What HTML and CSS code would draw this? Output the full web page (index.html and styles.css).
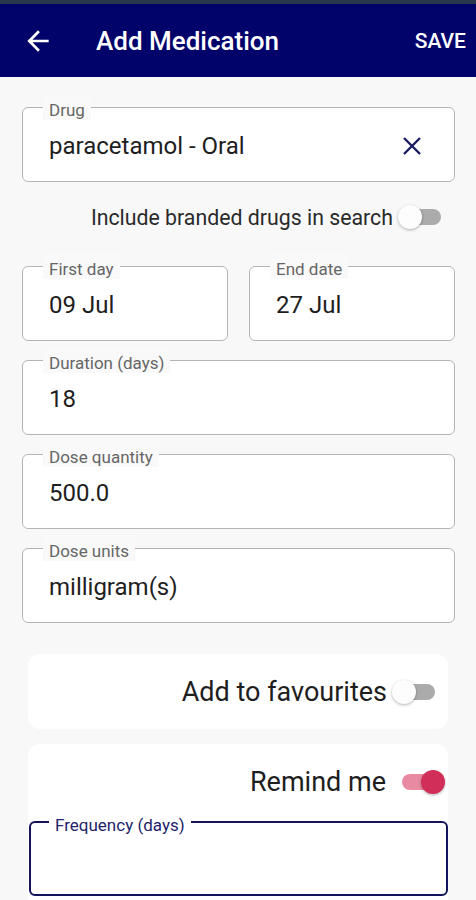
FILE: index.html
```html
<!DOCTYPE html>
<html lang="en">
<head>
  <meta charset="UTF-8" />
  <meta name="viewport" content="width=device-width, initial-scale=1" />
  <title>Add Medication</title>
  <link rel="stylesheet" href="styles.css">
</head>
<body>

  <header class="appbar">
    <span class="back">
      <svg width="32" height="32" viewBox="0 0 24 24"><path d="M20 11H7.83l5.59-5.59L12 4l-8 8 8 8 1.41-1.41L7.83 13H20v-2z" fill="#fff"/></svg>
    </span>
    <h1 class="title">Add Medication</h1>
    <span class="save">SAVE</span>
  </header>

  <main class="form">
    <fieldset class="field">
      <legend>Drug</legend>
      <div class="value-row">
        <span class="value">paracetamol - Oral</span>
        <svg class="clear" width="20" height="20" viewBox="0 0 20 20"><path d="M2 2L18 18M18 2L2 18" stroke="#1c1c60" stroke-width="2.4" fill="none"/></svg>
      </div>
    </fieldset>

    <div class="toggle-row branded">
      <span>Include branded drugs in search</span>
      <span class="switch"></span>
    </div>

    <div class="dates">
      <fieldset class="field">
        <legend>First day</legend>
        <span class="value">09 Jul</span>
      </fieldset>
      <fieldset class="field">
        <legend>End date</legend>
        <span class="value">27 Jul</span>
      </fieldset>
    </div>

    <fieldset class="field">
      <legend>Duration (days)</legend>
      <span class="value">18</span>
    </fieldset>

    <fieldset class="field">
      <legend>Dose quantity</legend>
      <span class="value">500.0</span>
    </fieldset>

    <fieldset class="field">
      <legend>Dose units</legend>
      <span class="value">milligram(s)</span>
    </fieldset>

    <section class="card fav">
      <div class="toggle-row big">
        <span>Add to favourites</span>
        <span class="switch"></span>
      </div>
    </section>

    <section class="card remind">
      <div class="toggle-row big">
        <span>Remind me</span>
        <span class="switch on"></span>
      </div>
      <fieldset class="field focus">
        <legend>Frequency (days)</legend>
        <span class="value">&nbsp;</span>
      </fieldset>
    </section>
  </main>

</body>
</html>
```

FILE: styles.css
```css
body {
  margin: 0;
  font-family: Roboto, "Noto Sans", Arial, sans-serif;
  background: #f8f8f8;
  color: #1e1e1e;
  overflow: hidden;
}
.appbar {
  display: flex;
  align-items: center;
  height: 73px;
  border-top: 4px solid #27384c;
  background: #02026b;
  color: #fff;
  padding: 0 10px 0 22px;
}
.back {
  display: flex;
  width: 32px;
}
.title {
  margin: 0 0 0 42px;
  font-size: 26px;
  font-weight: 500;
  flex: 1;
}
.save {
  font-size: 21px;
  font-weight: 500;
}
.form {
  padding: 17px 21px 0 22px;
}
.field {
  margin: 0 0 6px 0;
  padding: 12px 26px 21px 26px;
  border: 1px solid #b4b4b4;
  border-radius: 6px;
  background: #fff;
  min-width: 0;
}
.field legend {
  margin-left: -6px;
  padding: 6px 6px 0 6px;
  font-size: 17px;
  line-height: 20px;
  color: #666;
  background: #f9f9f9;
}
.value {
  display: block;
  font-size: 24px;
  line-height: 28px;
}
.value-row {
  display: flex;
  align-items: center;
  justify-content: space-between;
  padding-right: 6px;
}
.dates {
  display: grid;
  grid-template-columns: 1fr 1fr;
  column-gap: 21px;
}
.toggle-row {
  display: flex;
  align-items: center;
  justify-content: flex-end;
  gap: 5px;
}
.toggle-row.branded {
  height: 30px;
  margin: 20px 0 21px 0;
  padding-right: 14px;
  font-size: 21.3px;
  color: #2a2a2a;
}
.switch {
  position: relative;
  display: inline-block;
  width: 43px;
  height: 26px;
}
.switch::before {
  content: '';
  position: absolute;
  left: 8px;
  right: 0;
  top: 5px;
  height: 16px;
  border-radius: 8px;
  background: #ababab;
}
.switch::after {
  content: '';
  position: absolute;
  left: 0;
  top: 1px;
  width: 24px;
  height: 24px;
  border-radius: 50%;
  background: #fdfdfd;
  box-shadow: 0 1px 3px rgba(0, 0, 0, 0.3);
}
.switch.on::before {
  left: 0;
  right: 10px;
  background: #e78aa2;
}
.switch.on::after {
  left: auto;
  right: 0;
  background: #d12f5a;
}
.card {
  margin: 31px 7px 0 6px;
  background: #fff;
  border-radius: 12px;
}
.card.fav {
  padding: 26px 13px 25px 0;
}
.toggle-row.big {
  font-size: 27px;
  height: 24px;
}
.card.remind {
  margin-top: 15px;
  padding: 26px 0 40px 0;
}
.card.remind .toggle-row {
  padding-right: 3px;
  gap: 16px;
}
.field.focus {
  margin: 15px 0 0 1px;
  border: 2px solid #14145e;
  padding-left: 24px;
  padding-bottom: 19px;
}
.field.focus legend {
  color: #23236b;
  background: #fff;
}
```
